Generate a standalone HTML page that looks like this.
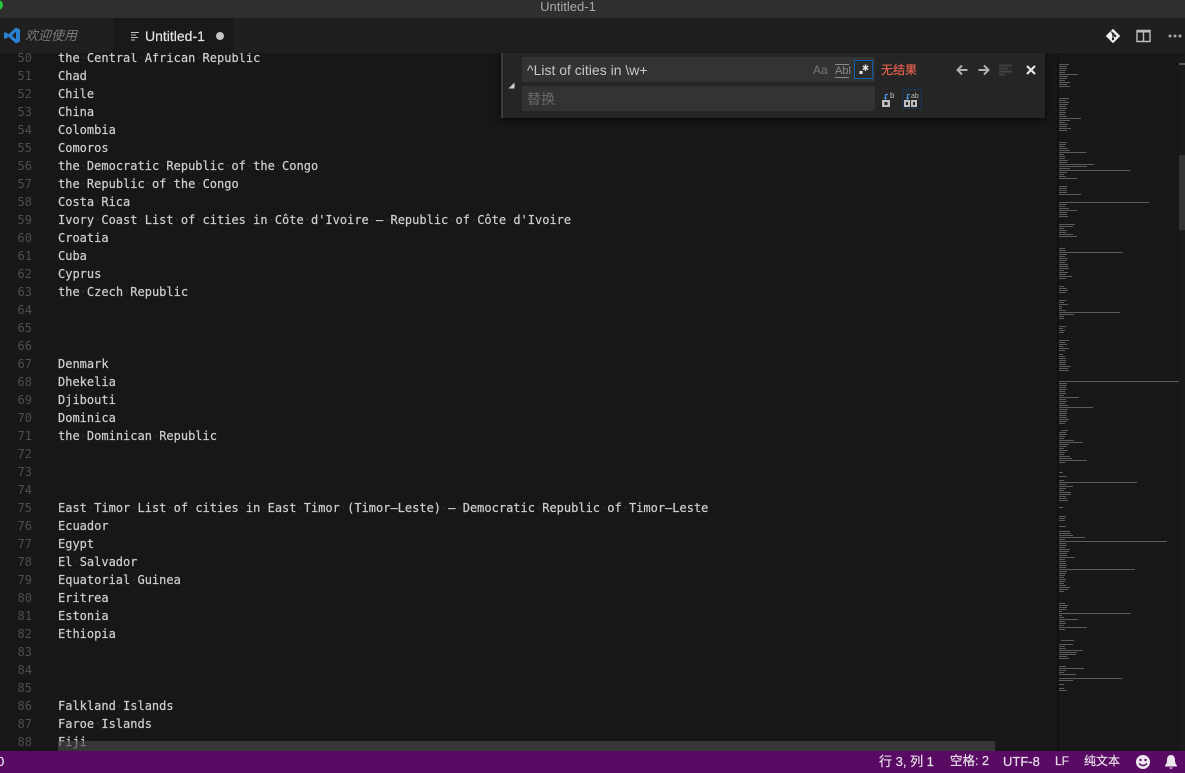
<!DOCTYPE html>
<html><head><meta charset="utf-8"><style>
html,body{margin:0;padding:0;background:#171717;}
#w{position:relative;width:1185px;height:773px;overflow:hidden;background:#171717;font-family:"Liberation Sans","Noto Sans CJK SC",sans-serif;}
.a{position:absolute;white-space:pre;}
#ed{position:absolute;left:0;top:53px;width:1058px;height:698px;overflow:hidden;}
#nums{position:absolute;left:0;top:-4px;width:32px;text-align:right;font:12px/18px "DejaVu Sans Mono",monospace;color:#4e4e4e;white-space:pre;}
#txt{position:absolute;left:58px;top:-4px;font:12px/18px "DejaVu Sans Mono",monospace;color:#cfcfcf;white-space:pre;-webkit-text-stroke:.2px #cfcfcf;}
#txt i{font-style:normal;color:#333;-webkit-text-stroke:0;}
.s{-webkit-text-stroke:.2px #e9dfeb;}
</style></head><body><div id="w">

<div class="a" style="left:0;top:0;width:1185px;height:18px;background:#2f2f2f;"></div>
<div class="a" style="left:-7px;top:0;width:10px;height:10px;border-radius:50%;background:#27c93f;"></div>
<div class="a" style="left:0;width:1136px;top:-1px;text-align:center;font-size:13px;line-height:16px;color:#a8a8a8;">Untitled-1</div>

<div class="a" style="left:0;top:18px;width:1185px;height:35px;background:#1f1f1f;"></div>
<div class="a" style="left:113px;top:18px;width:120px;height:35px;background:#191919;"></div>
<svg class="a" style="left:3px;top:27px;" width="18" height="17" viewBox="0 0 18 17"><path d="M13 0.5L17 2.5V14.5L13 16.5L5.5 9.7L2.5 12L1 11V6L2.500 5L5.500 7.300ZM13 4.800L9 8.500L13 12.200Z" fill="#2a80d2" fill-rule="evenodd"/></svg>
<div class="a" style="left:25px;top:27px;font-size:13px;line-height:18px;font-style:italic;color:#7c7c7c;">欢迎使用</div>
<svg class="a" style="left:130px;top:31px;" width="10" height="10"><path d="M1 1.500h8M1 4h5M1 6.500h7M1 9h4" stroke="#c0c0c0" stroke-width="1.100"/></svg>
<div class="a" style="left:145px;top:27px;font-size:14px;line-height:18px;color:#e4e4e4;-webkit-text-stroke:.2px #e4e4e4;">Untitled-1</div>
<div class="a" style="left:216px;top:32px;width:8px;height:8px;border-radius:50%;background:#c4c4c4;"></div>
<svg class="a" style="left:1105px;top:28px;" width="16" height="16" viewBox="0 0 16 16"><path d="M8 .8L15.200 8 8 15.200.8 8Z" fill="#f2f2f2"/><path d="M6 3.500L10 7.500M8 6V12" stroke="#1f1f1f" stroke-width="1.200"/><circle cx="8" cy="5.800" r="1.200" fill="#1f1f1f"/><circle cx="8" cy="11" r="1.200" fill="#1f1f1f"/><circle cx="10.200" cy="8" r="1.200" fill="#1f1f1f"/></svg>
<svg class="a" style="left:1136px;top:29px;" width="15" height="14"><path d="M1 1.500h13v11H1ZM7.500 2v10" fill="none" stroke="#bdbdbd" stroke-width="1.400"/><path d="M1 1h13v2.500H1Z" fill="#bdbdbd"/></svg>
<svg class="a" style="left:1168px;top:33px;" width="14" height="6"><circle cx="2" cy="3" r="1.500" fill="#a8a8a8"/><circle cx="7" cy="3" r="1.500" fill="#a8a8a8"/><circle cx="12" cy="3" r="1.500" fill="#a8a8a8"/></svg>

<div id="ed">
<div id="nums">50
51
52
53
54
55
56
57
58
59
60
61
62
63
64
65
66
67
68
69
70
71
72
73
74
75
76
77
78
79
80
81
82
83
84
85
86
87
88</div>
<div id="txt">the<i>·</i>Central<i>·</i>African<i>·</i>Republic
Chad
Chile
China
Colombia
Comoros
the<i>·</i>Democratic<i>·</i>Republic<i>·</i>of<i>·</i>the<i>·</i>Congo
the<i>·</i>Republic<i>·</i>of<i>·</i>the<i>·</i>Congo
Costa<i>·</i>Rica
Ivory<i>·</i>Coast<i>·</i>List<i>·</i>of<i>·</i>cities<i>·</i>in<i>·</i>Côte<i>·</i>d'Ivoire<i>·</i>–<i>·</i>Republic<i>·</i>of<i>·</i>Côte<i>·</i>d'Ivoire
Croatia
Cuba
Cyprus
the<i>·</i>Czech<i>·</i>Republic



Denmark
Dhekelia
Djibouti
Dominica
the<i>·</i>Dominican<i>·</i>Republic



East<i>·</i>Timor<i>·</i>List<i>·</i>of<i>·</i>cities<i>·</i>in<i>·</i>East<i>·</i>Timor<i>·</i>(Timor–Leste)<i>·</i>–<i>·</i>Democratic<i>·</i>Republic<i>·</i>of<i>·</i>Timor–Leste
Ecuador
Egypt
El<i>·</i>Salvador
Equatorial<i>·</i>Guinea
Eritrea
Estonia
Ethiopia



Falkland<i>·</i>Islands
Faroe<i>·</i>Islands
Fiji</div>
</div>

<div class="a" style="left:58px;top:741px;width:937px;height:10px;background:rgba(70,70,70,.65);"></div>

<div class="a" style="left:1057px;top:53px;width:2px;height:698px;background:#111;"></div>
<svg class="a" style="left:0;top:0;filter:blur(.35px);" width="1185" height="773"><path stroke="#5c5c5c" stroke-width="1.100" fill="none" d="M1059 64.500h10M1059 66.500h8M1059 68.500h8M1059 70.500h7M1059 72.500h6M1059 74.500h19M1059 76.500h9M1059 78.500h8M1059 80.500h6M1059 82.500h11M1059 84.500h8M1059 86.500h11
M1059 98.500h10M1059 100.500h7M1059 102.500h10M1059 104.500h9M1059 106.500h7M1059 108.500h8M1059 110.500h6M1059 112.500h7M1059 114.500h6M1059 116.500h8M1059 118.500h22M1059 120.500h11M1059 122.500h6M1059 124.500h9M1059 126.500h8M1059 128.500h12M1059 130.500h8
M1059 142.500h8M1059 144.500h7M1059 146.500h6M1059 148.500h9M1059 150.500h11M1059 152.500h27M1059 154.500h5M1059 156.500h6M1059 158.500h6M1059 160.500h9M1059 162.500h8M1059 164.500h35M1059 166.500h28M1059 168.500h11M1059 170.500h71M1059 172.500h8M1059 174.500h5M1059 176.500h7M1059 178.500h18
M1059 186.500h8M1059 188.500h8M1059 190.500h8M1059 192.500h8M1059 194.500h22
M1059 202.500h90M1059 204.500h8M1059 206.500h6M1059 208.500h10M1059 210.500h18M1059 212.500h8M1059 214.500h8M1059 216.500h9
M1059 224.500h16M1059 226.500h14M1059 228.500h5M1059 230.500h8M1059 232.500h7M1059 234.500h14M1059 236.500h18
M1059 248.500h6M1059 250.500h7M1059 252.500h64M1059 254.500h8M1059 256.500h6M1059 258.500h9M1059 260.500h8M1059 262.500h6M1059 264.500h9M1059 266.500h9M1059 268.500h10M1059 270.500h5M1059 272.500h9M1059 274.500h7M1059 276.500h13M1059 278.500h7
M1059 286.500h5M1059 288.500h8M1059 290.500h9M1059 292.500h7
M1059 300.500h7M1059 302.500h5M1059 304.500h9M1059 306.500h3M1059 308.500h3M1059 310.500h7M1059 312.500h61M1059 314.500h15M1059 316.500h5M1059 318.500h5
M1059 326.500h7M1059 328.500h4M1059 330.500h6M1059 332.500h5
M1059 340.500h10M1059 342.500h6M1059 344.500h8M1059 346.500h4M1059 348.500h10M1059 350.500h6
M1059 354.500h4M1059 356.500h6M1059 358.500h7M1059 360.500h7M1059 362.500h7M1059 364.500h7M1059 366.500h12M1059 368.500h9M1059 370.500h10
M1059 381.500h120M1059 383.500h8M1059 385.500h8M1059 387.500h7M1059 389.500h8M1059 391.500h6M1059 393.500h7M1059 395.500h5M1059 397.500h20M1059 399.500h7M1059 401.500h8M1059 403.500h6M1059 405.500h9M1059 407.500h34M1059 409.500h9M1059 411.500h8M1059 413.500h8M1059 415.500h7M1059 417.500h8M1059 419.500h10M1059 421.500h8M1059 423.500h6
M1061 430.500h7M1059 432.500h7M1059 434.500h8M1059 436.500h6M1059 438.500h5M1059 440.500h15M1059 442.500h24M1059 444.500h10M1059 446.500h8M1059 448.500h5M1059 450.500h9M1059 452.500h6M1059 454.500h5M1059 456.500h11M1059 458.500h13M1059 460.500h28M1059 462.500h6
M1059 472.500h4M1059 476.500h8
M1059 480.500h5M1059 482.500h78M1059 484.500h7M1059 486.500h14M1059 488.500h7M1059 490.500h5M1059 492.500h12M1059 494.500h12M1059 496.500h7M1059 498.500h8M1059 500.500h9
M1059 507.500h4
M1059 516.500h7M1059 518.500h6M1059 520.500h6
M1059 526.500h7
M1059 531.500h11M1059 533.500h12M1059 535.500h14M1059 537.500h26M1059 539.500h6M1059 541.500h108M1059 543.500h7M1059 545.500h8M1059 547.500h6M1059 549.500h11M1059 551.500h10M1059 553.500h8M1059 555.500h8M1059 557.500h16M1059 559.500h6M1059 561.500h7M1059 563.500h7M1059 565.500h8M1059 567.500h7M1059 569.500h76M1059 571.500h8M1059 573.500h7M1059 575.500h6M1059 577.500h5M1059 579.500h7M1059 581.500h6M1059 583.500h5M1059 585.500h7M1059 587.500h11M1059 589.500h9M1059 591.500h5
M1059 603.500h6M1059 605.500h9M1059 607.500h8M1059 609.500h7M1059 611.500h3M1059 613.500h72M1059 615.500h3M1059 617.500h5M1059 619.500h19M1059 621.500h6M1059 623.500h7M1059 625.500h5M1059 627.500h28M1059 629.500h6
M1061 640.500h13
M1059 644.500h14M1059 646.500h6M1059 648.500h7M1059 650.500h24M1059 652.500h18M1059 654.500h17M1059 656.500h8M1059 658.500h10
M1059 666.500h7M1059 668.500h25M1059 670.500h7M1059 672.500h5M1059 674.500h17M1059 678.500h63M1059 680.500h14
M1059 684.500h5M1059 688.500h5M1059 690.500h8"/></svg>

<div class="a" style="left:1179px;top:53px;width:6px;height:698px;background:#1a1a1a;"></div>
<div class="a" style="left:1179px;top:63px;width:6px;height:2px;background:#5a5a5a;"></div>
<div class="a" style="left:1179px;top:155px;width:6px;height:75px;background:#333;"></div>

<!-- find widget -->
<div class="a" style="left:501px;top:53px;width:544px;height:65px;background:#252526;box-shadow:0 2px 6px #0a0a0a;"></div>
<div class="a" style="left:501px;top:53px;width:2px;height:65px;background:#3a3a3a;"></div>
<svg class="a" style="left:508px;top:82px;" width="7" height="7"><path d="M6.500 .5V6.500H.5Z" fill="#d0d0d0"/></svg>
<div class="a" style="left:522px;top:57px;width:353px;height:25px;background:#333;"></div>
<div class="a" style="left:522px;top:86px;width:353px;height:25px;background:#333;"></div>
<div class="a" style="left:527px;top:62px;font-size:14px;line-height:17px;color:#c8c8c8;">^List of cities in \w+</div>
<div class="a" style="left:527px;top:91px;font-size:14px;line-height:17px;color:#6a6a6a;">替换</div>
<div class="a" style="left:813px;top:62px;font-size:12px;line-height:16px;color:#777;">Aa</div>
<div class="a" style="left:835px;top:65px;font-size:11px;line-height:12px;color:#8a8a8a;width:14px;text-align:center;">Abl</div>
<div class="a" style="left:835px;top:64px;width:14px;height:1px;background:#8a8a8a;"></div>
<div class="a" style="left:835px;top:77px;width:14px;height:1px;background:#8a8a8a;"></div>
<div class="a" style="left:854px;top:60px;width:17px;height:17px;border:1.500px solid #0e5fae;background:#2b2b2c;"></div>
<svg class="a" style="left:857px;top:63px;" width="14" height="14"><rect x="2.500" y="8" width="3" height="3" fill="#e4e4e4"/><path d="M8.500 1.500v6.500M5.800 3l5.400 3.500M11.200 3L5.800 6.500" stroke="#e4e4e4" stroke-width="1.400"/></svg>
<div class="a" style="left:881px;top:62px;font-size:12px;line-height:17px;color:#e4604d;-webkit-text-stroke:.2px #e4604d;">无结果</div>
<svg class="a" style="left:956px;top:64px;" width="12" height="12"><path d="M6 1.500L1.500 6 6 10.500M2 6H11.500" fill="none" stroke="#b0b0b0" stroke-width="2"/></svg>
<svg class="a" style="left:978px;top:64px;" width="12" height="12"><path d="M6 1.500L10.500 6 6 10.500M10 6H.5" fill="none" stroke="#b0b0b0" stroke-width="2"/></svg>
<svg class="a" style="left:999px;top:64px;" width="14" height="13"><path d="M0 1.500h13M0 4.500h9M0 7.500h13M0 10.500h6" stroke="#414141" stroke-width="2"/></svg>
<svg class="a" style="left:1026px;top:65px;" width="10" height="10"><path d="M1 1L9 9M9 1L1 9" stroke="#e8e8e8" stroke-width="2.200"/></svg>
<svg class="a" style="left:882px;top:92px;" width="14" height="15"><path d="M6 2.500H3.500V6" fill="none" stroke="#4a90d9" stroke-width="1.200"/><path d="M1.500 5.500h4L3.500 8Z" fill="#4a90d9"/><text x="8" y="6" font-family="Liberation Sans" font-size="8" fill="#bdbdbd">b</text><rect x="0" y="8" width="8" height="7" fill="#bdbdbd"/><rect x="2.500" y="10" width="3" height="3" fill="#252526"/></svg>
<div class="a" style="left:902px;top:89px;width:18px;height:18px;border:1px solid #123a5e;"></div>
<svg class="a" style="left:904px;top:92px;" width="15" height="15"><path d="M6 2.500H3.500V6" fill="none" stroke="#4a90d9" stroke-width="1.200"/><path d="M1.500 5.500h4L3.500 8Z" fill="#4a90d9"/><text x="7" y="6" font-family="Liberation Sans" font-size="7" fill="#bdbdbd">ab</text><rect x="0" y="8" width="6" height="7" fill="#bdbdbd"/><rect x="7" y="8" width="6" height="7" fill="#bdbdbd"/><rect x="2" y="10" width="2" height="3" fill="#252526"/><rect x="9" y="10" width="2" height="3" fill="#252526"/></svg>

<!-- status bar -->
<div class="a" style="left:0;top:751px;width:1185px;height:22px;background:#590a63;"></div>
<div class="a s" style="left:-3px;top:753px;font-size:13px;line-height:17px;color:#efe6f1;">0</div>
<div class="a s" style="left:879px;top:753px;font-size:13px;line-height:17px;color:#e9dfeb;">行 3, 列 1</div>
<div class="a s" style="left:950px;top:753px;font-size:12.500px;line-height:17px;color:#e9dfeb;">空格: 2</div>
<div class="a s" style="left:1003px;top:753px;font-size:13px;line-height:17px;color:#e9dfeb;">UTF-8</div>
<div class="a s" style="left:1055px;top:753px;font-size:12px;line-height:17px;color:#e9dfeb;">LF</div>
<div class="a s" style="left:1084px;top:753px;font-size:12px;line-height:17px;color:#e9dfeb;">纯文本</div>
<svg class="a" style="left:1135px;top:754px;" width="16" height="16"><circle cx="8" cy="8" r="7" fill="#efe6f1"/><circle cx="5.500" cy="6" r="1.200" fill="#590a63"/><circle cx="10.500" cy="6" r="1.200" fill="#590a63"/><path d="M4 9.500Q8 13.500 12 9.500" fill="none" stroke="#590a63" stroke-width="1.300"/></svg>
<svg class="a" style="left:1164px;top:754px;" width="14" height="16"><path d="M7 1C4 1 3 3.500 3 6C3 9 2 10.500 1 11.500V12.500H13V11.500C12 10.500 11 9 11 6C11 3.500 10 1 7 1Z" fill="#efe6f1"/><path d="M5.200 13.500a1.900 1.900 0 0 0 3.600 0Z" fill="#efe6f1"/></svg>

</div></body></html>
